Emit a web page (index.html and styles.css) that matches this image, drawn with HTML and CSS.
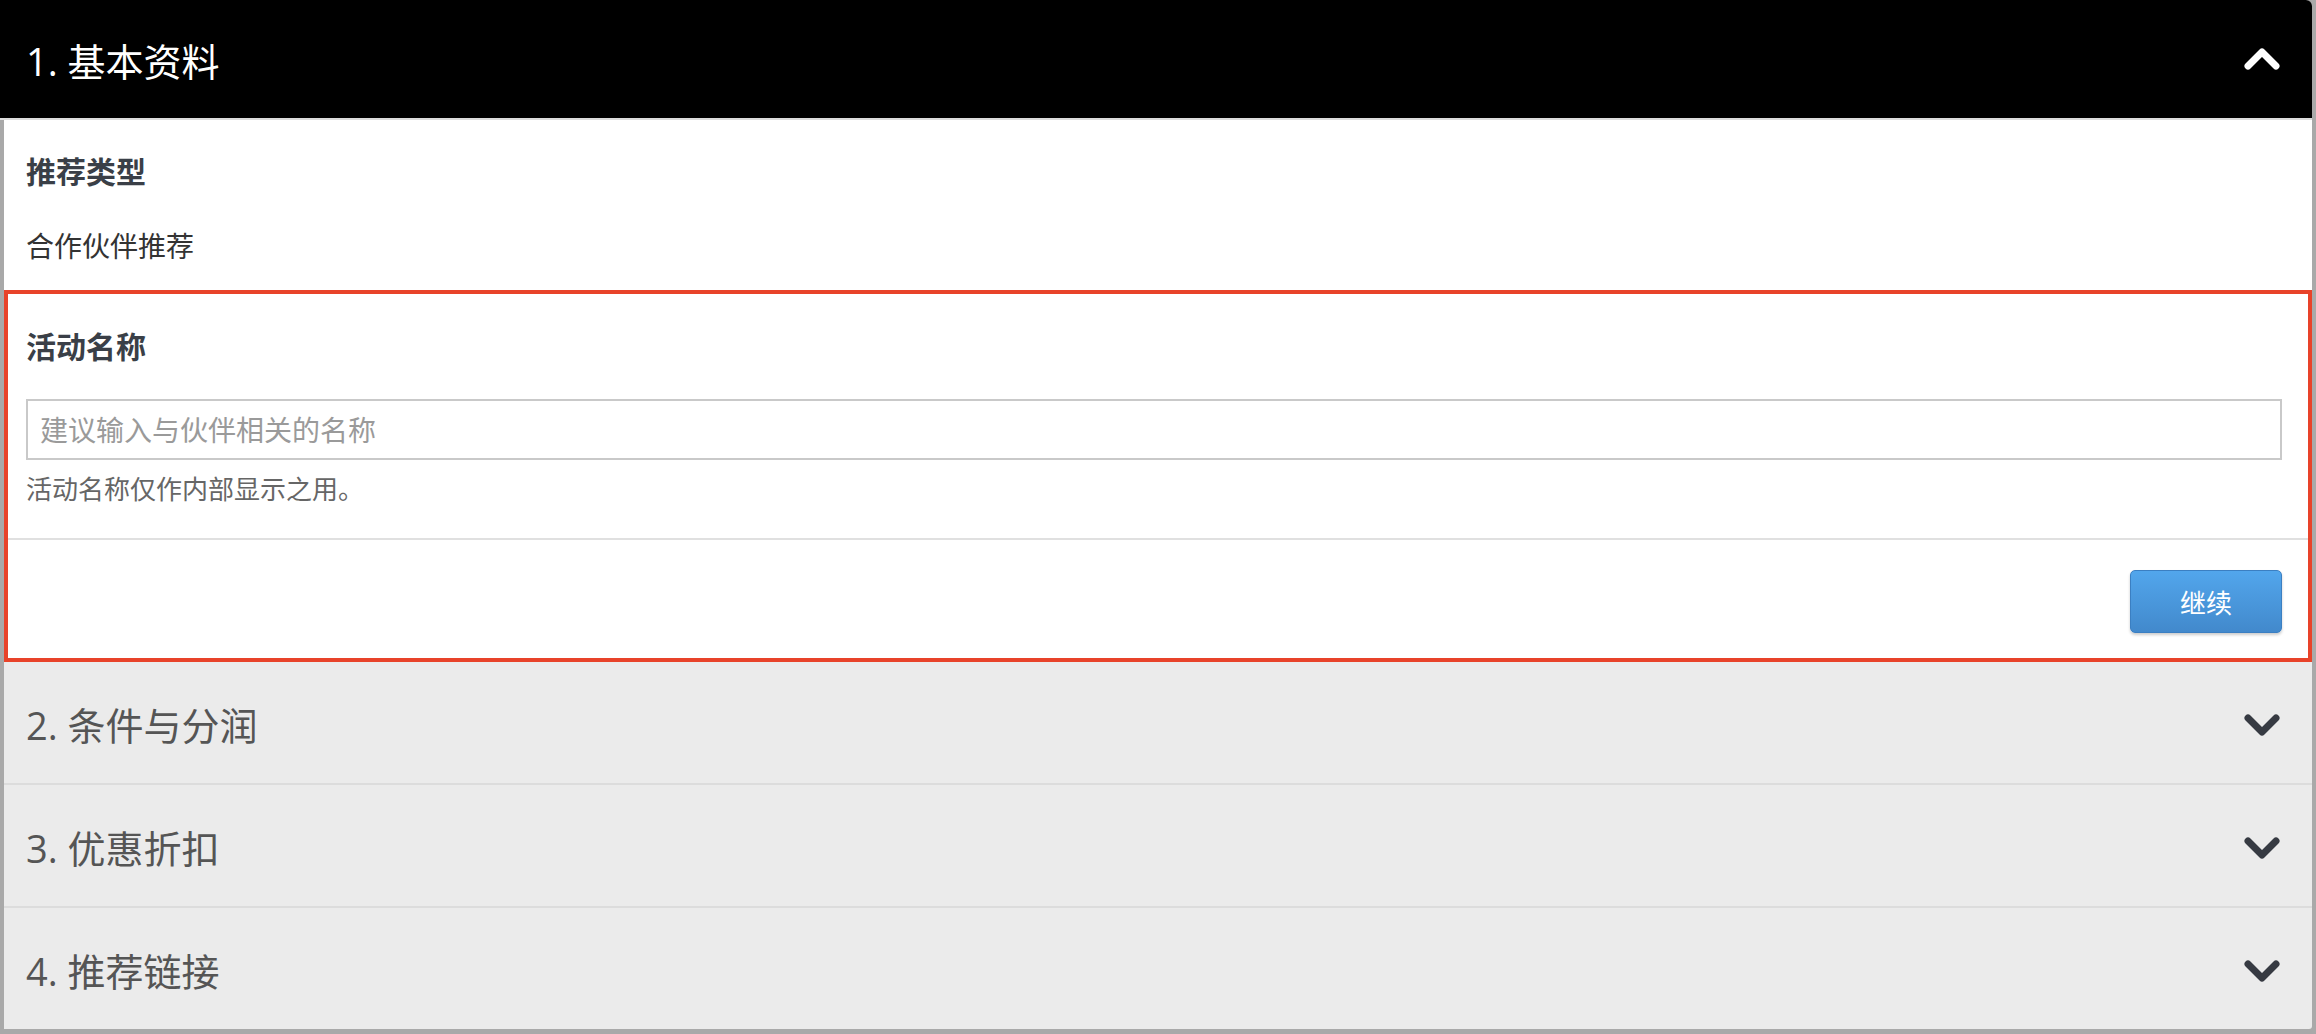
FILE: index.html
```html
<!DOCTYPE html>
<html lang="zh-CN">
<head>
    <meta charset="UTF-8">
    <meta name="viewport" content="width=device-width, initial-scale=1.0">
    <title>推荐活动设置</title>
    <link rel="stylesheet" href="styles.css">
</head>
<body>
    <div class="panel">
        <!-- Step 1: open -->
        <div class="step-head active">
            <span class="step-title">1. 基本资料</span>
            <svg class="chevron" width="36" height="24" viewBox="0 0 36 24">
                <polyline points="4,19 18,5 32,19" />
            </svg>
        </div>

        <div class="step-body">
            <div class="field">
                <div class="field-label">推荐类型</div>
                <div class="field-value">合作伙伴推荐</div>
            </div>

            <div class="highlight">
                <div class="field field-name">
                    <label class="field-label" for="campaign-name">活动名称</label>
                    <input id="campaign-name" class="text-input" type="text" placeholder="建议输入与伙伴相关的名称">
                    <div class="field-help">活动名称仅作内部显示之用。</div>
                </div>
                <div class="step-footer">
                    <button class="btn-primary">继续</button>
                </div>
            </div>
        </div>

        <!-- Remaining steps: collapsed -->
        <div class="step-head">
            <span class="step-title">2. 条件与分润</span>
            <svg class="chevron" width="36" height="24" viewBox="0 0 36 24">
                <polyline points="4,5 18,19 32,5" />
            </svg>
        </div>
        <div class="step-head">
            <span class="step-title">3. 优惠折扣</span>
            <svg class="chevron" width="36" height="24" viewBox="0 0 36 24">
                <polyline points="4,5 18,19 32,5" />
            </svg>
        </div>
        <div class="step-head last">
            <span class="step-title">4. 推荐链接</span>
            <svg class="chevron" width="36" height="24" viewBox="0 0 36 24">
                <polyline points="4,5 18,19 32,5" />
            </svg>
        </div>
    </div>
</body>
</html>
```

FILE: styles.css
```css
body {
    margin: 0;
    background: #a9a9a9;
    font-family: "Open Sans", "Noto Sans CJK SC", sans-serif;
}

.panel {
    margin: 0 4px 4px 4px;
    background: #ebebeb;
    border-radius: 0 6px 3px 0;
}

.step-head {
    height: 121px;
    padding: 0 32px 0 22px;
    display: flex;
    align-items: center;
    justify-content: space-between;
    border-bottom: 2px solid #dcdcdc;
    color: #555;
}

.step-head.last {
    border-bottom: none;
}

.step-head.active {
    height: 118px;
    margin-left: -4px;
    padding-left: 26px;
    background: #000;
    color: #fff;
    border-top-right-radius: 6px;
}

.step-title {
    font-size: 38px;
    line-height: 50px;
    padding-top: 4px;
}

.chevron {
    display: block;
    margin-top: 4px;
}

.chevron polyline {
    fill: none;
    stroke: #363a42;
    stroke-width: 7;
    stroke-linecap: round;
    stroke-linejoin: round;
}

.active .chevron {
    margin-top: 0;
}

.active .chevron polyline {
    stroke: #fff;
}

.step-body {
    background: #fff;
}

.field {
    padding: 32px 30px 24px 22px;
}

.field-label {
    display: block;
    font-size: 30px;
    font-weight: bold;
    line-height: 40px;
    color: #3a3f47;
}

.field-value {
    margin-top: 34px;
    font-size: 28px;
    line-height: 40px;
    color: #333;
}

.highlight {
    border: 4px solid #e8432a;
}

.field-name {
    padding: 33px 26px 31px 18px;
}

.text-input {
    display: block;
    box-sizing: border-box;
    width: 100%;
    height: 61px;
    margin-top: 32px;
    padding: 0 12px;
    border: 2px solid #c9c9c9;
    font-family: inherit;
    font-size: 28px;
    color: #333;
    outline: none;
}

.text-input::placeholder {
    color: #9a9a9a;
}

.field-help {
    margin-top: 11px;
    font-size: 26px;
    line-height: 36px;
    color: #666;
}

.step-footer {
    display: flex;
    justify-content: flex-end;
    padding: 30px 26px 25px 18px;
    border-top: 2px solid #e0e0e0;
}

.btn-primary {
    width: 152px;
    height: 63px;
    border: 1px solid #3b7fc2;
    border-radius: 5px;
    background: linear-gradient(#52a6ec, #4289cc);
    box-shadow: 0 2px 3px rgba(0, 0, 0, 0.2);
    color: #fff;
    font-family: inherit;
    font-size: 26px;
    cursor: pointer;
}
```
